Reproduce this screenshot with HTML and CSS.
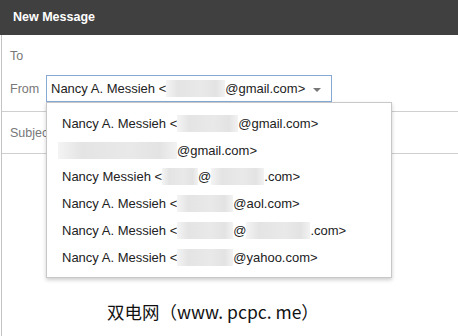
FILE: index.html
```html
<!DOCTYPE html>
<html lang="en">
<head>
    <meta charset="UTF-8">
    <meta name="viewport" content="width=device-width, initial-scale=1.0">
    <title>New Message</title>
    <link rel="stylesheet" href="styles.css">
</head>
<body>
    <div class="compose">
        <div class="header">New Message</div>

        <div class="fields">
            <div class="row row-to"><span class="label">To</span></div>
            <div class="row row-from">
                <span class="label">From</span>
                <div class="select">
                    Nancy A. Messieh &lt;<span class="blur" style="width: 59px"></span>@gmail.com&gt;
                    <span class="caret"></span>
                </div>
            </div>
            <div class="row row-subject"><span class="label">Subject</span></div>

            <!-- sender picker, open -->
            <div class="menu">
                <div class="menu-item">Nancy A. Messieh &lt;<span class="blur" style="width: 61px"></span>@gmail.com&gt;</div>
                <div class="menu-item item-bare"><span class="blur" style="width: 119px"></span>@gmail.com&gt;</div>
                <div class="menu-item">Nancy Messieh &lt;<span class="blur" style="width: 36px"></span>@<span class="blur" style="width: 53px"></span>.com&gt;</div>
                <div class="menu-item">Nancy A. Messieh &lt;<span class="blur" style="width: 56px"></span>@aol.com&gt;</div>
                <div class="menu-item">Nancy A. Messieh &lt;<span class="blur" style="width: 56px"></span>@<span class="blur" style="width: 64px"></span>.com&gt;</div>
                <div class="menu-item">Nancy A. Messieh &lt;<span class="blur" style="width: 56px"></span>@yahoo.com&gt;</div>
            </div>
        </div>

        <div class="body"></div>

        <div class="watermark">双电网（www. pcpc. me）</div>
    </div>
</body>
</html>
```

FILE: styles.css
```css
* { margin: 0; padding: 0; box-sizing: border-box; }
body {
    font-family: Arial, 'Liberation Sans', sans-serif;
    background: #fff;
    color: #222;
    width: 458px;
    height: 336px;
    overflow: hidden;
}
.compose {
    position: relative;
    height: 336px;
}
.header {
    height: 35px;
    background: #404040;
    color: #fff;
    font-weight: 700;
    font-size: 12.5px;
    line-height: 35px;
    padding-left: 13px;
}
.fields {
    position: relative;
    margin-left: 1px;
    border-left: 1px solid #c4c4c4;
}
.row {
    display: flex;
    align-items: center;
    padding-left: 8px;
}
.label {
    font-size: 12.5px;
    color: #777;
}
.row-to {
    height: 38px;
    padding-top: 3px;
}
.row-from {
    height: 39px;
    padding-bottom: 7px;
    border-bottom: 1px solid #cfcfcf;
}
.row-from .label {
    width: 36px;
}
.row-subject {
    height: 42px;
    border-bottom: 1px solid #cfcfcf;
}
.select {
    display: flex;
    align-items: center;
    width: 286px;
    height: 27px;
    border: 1px solid #86a9d6;
    padding-left: 4px;
    font-size: 13px;
    color: #222;
    white-space: nowrap;
}
.caret {
    width: 0;
    height: 0;
    margin-left: 8px;
    margin-top: 3px;
    border-left: 4px solid transparent;
    border-right: 4px solid transparent;
    border-top: 4px solid #777;
}
.blur {
    display: inline-block;
    height: 17px;
    vertical-align: middle;
    background: linear-gradient(90deg, #f4f4f4, #e4e4e4 20%, #e9e9e9 60%, #e3e3e3 85%, #f2f2f2);
}
.menu {
    position: absolute;
    left: 44px;
    top: 67px;
    width: 346px;
    height: 176px;
    padding: 7px 0;
    background: #fff;
    border: 1px solid #c8c8c8;
    box-shadow: 0 2px 4px rgba(0,0,0,0.2);
}
.menu-item {
    display: flex;
    align-items: center;
    height: 26.8px;
    padding-left: 15px;
    font-size: 13px;
    color: #222;
    white-space: nowrap;
}
.item-bare {
    padding-left: 11px;
}
.body {
    height: 183px;
    margin-left: 1px;
    border-left: 1px solid #c4c4c4;
}
.watermark {
    position: absolute;
    left: 107px;
    top: 299px;
    font-family: 'Noto Sans CJK SC', sans-serif;
    font-size: 17.5px;
    line-height: 26px;
    color: #111;
}
```
